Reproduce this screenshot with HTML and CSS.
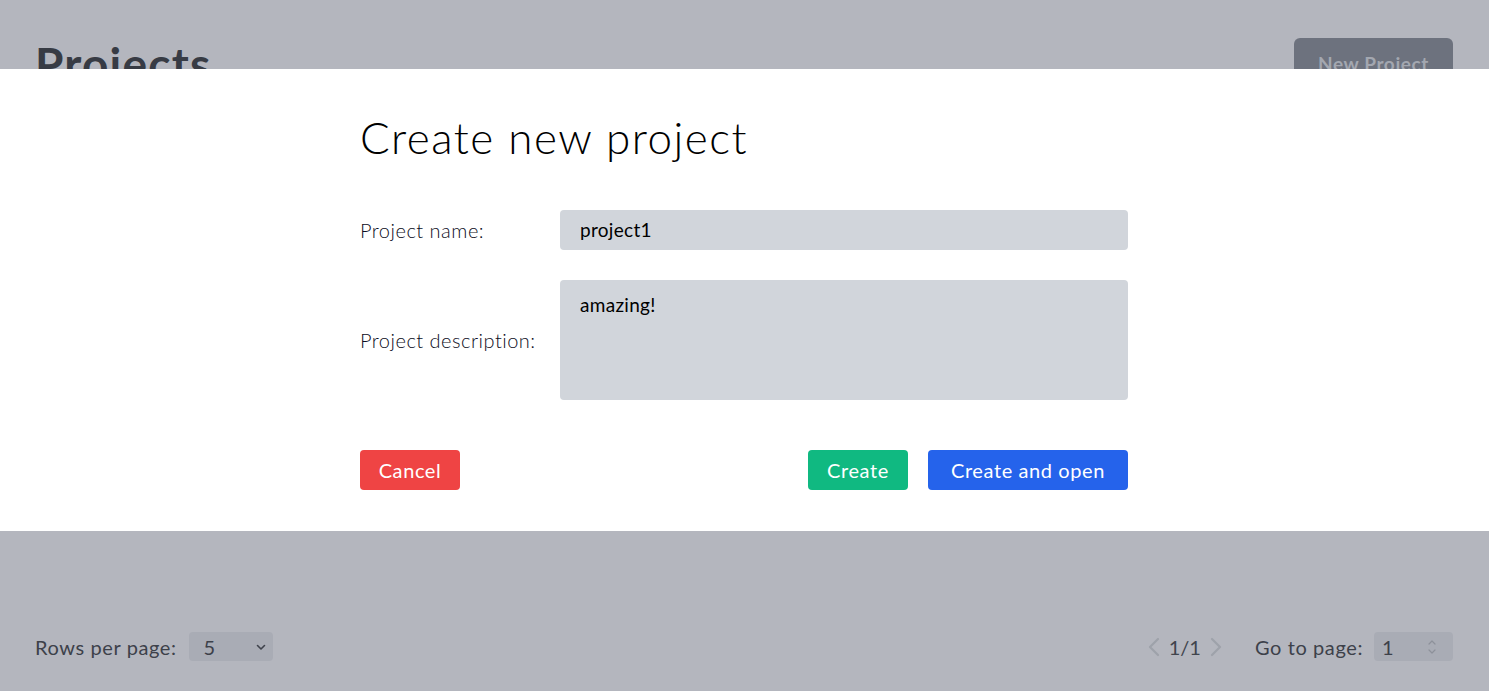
FILE: index.html
```html
<!DOCTYPE html>
<html>
<head>
<meta charset="utf-8">
<link rel="stylesheet" href="styles.css">
</head>
<body>
<div class="page">
  <header class="page-header">
    <h1 class="page-title">Projects</h1>
    <button class="btn-new">New Project</button>
  </header>
  <div class="page-spacer"></div>
  <footer class="pager">
    <div class="pager-left">
      <span class="pager-label">Rows per page:</span>
      <div class="select">
        <span>5</span>
        <svg class="select-icon" width="12" height="12" viewBox="0 0 12 12"><path d="M2.5 4.5 L6 8 L9.5 4.5" fill="none" stroke="#3f434c" stroke-width="1.6" stroke-linecap="round" stroke-linejoin="round"/></svg>
      </div>
    </div>
    <div class="pager-right">
      <div class="pages">
        <svg width="14" height="20" viewBox="0 0 14 20"><path d="M11 2 L3 10 L11 18" fill="none" stroke="#9ea2aa" stroke-width="2.2" stroke-linecap="round" stroke-linejoin="round"/></svg>
        <span class="pages-num">1/1</span>
        <svg width="14" height="20" viewBox="0 0 14 20"><path d="M3 2 L11 10 L3 18" fill="none" stroke="#9ea2aa" stroke-width="2.2" stroke-linecap="round" stroke-linejoin="round"/></svg>
      </div>
      <span class="pager-label">Go to page:</span>
      <div class="number">
        <span>1</span>
        <svg class="spin" width="10" height="18" viewBox="0 0 10 18"><path d="M2 6 L5 3 L8 6 M2 12 L5 15 L8 12" fill="none" stroke="#8d919a" stroke-width="1.2" stroke-linecap="round" stroke-linejoin="round"/></svg>
      </div>
    </div>
  </footer>
</div>
<div class="modal">
  <div class="modal-inner">
    <h2 class="modal-title">Create new project</h2>
    <div class="form-row">
      <label class="form-label">Project name:</label>
      <div class="field input">project1</div>
    </div>
    <div class="form-row">
      <label class="form-label">Project description:</label>
      <div class="field textarea">amazing!</div>
    </div>
    <div class="actions">
      <button class="btn btn-red">Cancel</button>
      <div class="actions-right">
        <button class="btn btn-green">Create</button>
        <button class="btn btn-blue wide">Create and open</button>
      </div>
    </div>
  </div>
</div>
</body>
</html>
```
FILE: styles.css
```css
* { box-sizing: border-box; }
html, body { margin: 0; padding: 0; height: 100%; }
body {
  font-family: Lato, "Noto Sans", sans-serif;
  background: #b4b6be;
  overflow: hidden;
}
.page {
  height: 691px;
  display: flex;
  flex-direction: column;
  padding: 38px 36px 30px 35px;
}
.page-header {
  display: flex;
  justify-content: space-between;
  align-items: flex-start;
}
.page-title {
  margin: 0;
  font-size: 46px;
  font-weight: 700;
  color: #373b44;
  line-height: 52px;
  letter-spacing: 1.2px;
}
.btn-new {
  border: 0;
  background: #6d727e;
  color: #a3a7b0;
  font-family: inherit;
  font-size: 19px;
  font-weight: 700;
  letter-spacing: 0.6px;
  border-radius: 6px;
  width: 159px;
  height: 50px;
}
.page-spacer { flex: 1; }
.pager {
  display: flex;
  justify-content: space-between;
  align-items: center;
  height: 29px;
  color: #3d414a;
  font-size: 20px;
  letter-spacing: 0.6px;
}
.pager-left, .pager-right { display: flex; align-items: center; }
.pager-label { margin-right: 11px; }
.pager-left .pager-label { margin-right: 12px; }
.select {
  width: 84px;
  height: 29px;
  background: #a9acb5;
  border-radius: 4px;
  display: flex;
  align-items: center;
  justify-content: space-between;
  padding: 0 6px 0 15px;
}
.pages { display: flex; align-items: center; gap: 8px; margin-right: 32px; }
.pages-num { color: #40444d; letter-spacing: 0; }
.number {
  width: 79px;
  height: 29px;
  background: #a9acb5;
  border-radius: 4px;
  display: flex;
  align-items: center;
  justify-content: space-between;
  padding: 0 16px 0 8px;
}
.modal {
  position: absolute;
  top: 69px;
  left: 0;
  right: 0;
  height: 462px;
  background: #fff;
  padding-right: 1px;
}
.modal-inner {
  width: 768px;
  margin: 0 auto;
  padding-top: 40px;
}
.modal-title {
  margin: 0 0 45px;
  font-size: 44px;
  font-weight: 300;
  line-height: 56px;
  color: #000;
  letter-spacing: 1.5px;
}
.form-row {
  display: flex;
  align-items: center;
  margin-bottom: 30px;
}
.form-label {
  width: 200px;
  font-size: 20px;
  font-weight: 300;
  color: #0d0d22;
  letter-spacing: 0.5px;
}
.field {
  flex: 1;
  background: #d1d5db;
  border-radius: 4px;
  font-size: 19px;
  color: #000;
  padding: 0 20px;
  letter-spacing: 0.3px;
}
.input { height: 40px; line-height: 40px; }
.textarea { height: 120px; padding-top: 12px; line-height: 26px; }
.actions {
  display: flex;
  justify-content: space-between;
  margin-top: 50px;
}
.actions-right { display: flex; gap: 20px; }
.btn {
  border: 0;
  border-radius: 4px;
  height: 40px;
  width: 100px;
  color: #fff;
  font-family: inherit;
  font-size: 20px;
  letter-spacing: 0.6px;
  padding: 0;
}
.btn.wide { width: 200px; }
.btn-red { background: #ef4444; }
.btn-green { background: #10b981; }
.btn-blue { background: #2563eb; }
```
